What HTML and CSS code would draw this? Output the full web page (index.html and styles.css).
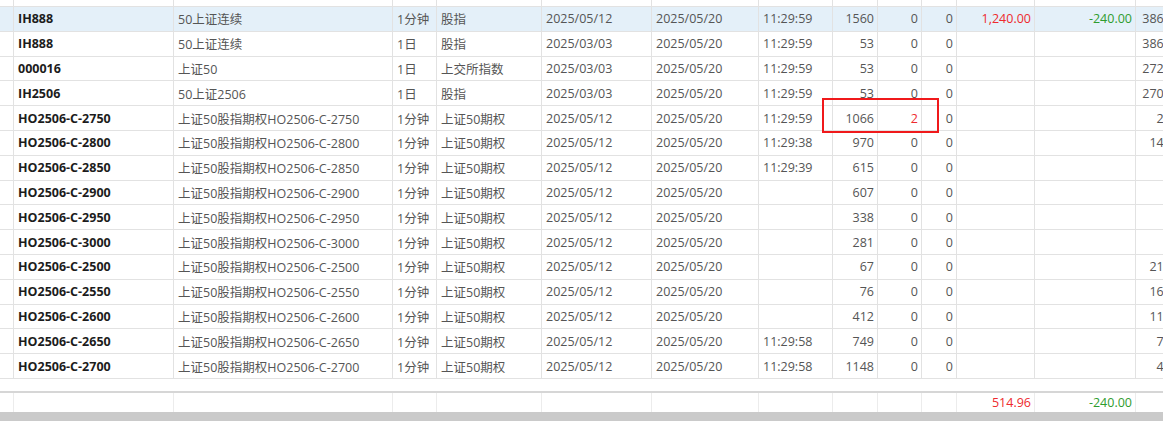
FILE: index.html
```html
<!DOCTYPE html>
<html lang="zh">
<head>
<meta charset="utf-8">
<title>行情</title>
<link rel="stylesheet" href="styles.css">
</head>
<body>
<div class="sheet">
  <div class="rows">
    <div class="row partial"><div class="c"></div><div class="c"></div><div class="c"></div><div class="c"></div><div class="c"></div><div class="c"></div><div class="c"></div><div class="c"></div><div class="c"></div><div class="c"></div><div class="c"></div><div class="c"></div><div class="c"></div><div class="c"></div></div>

    <div class="row sel"><div class="c"></div><div class="c code">IH888</div><div class="c">50上证连续</div><div class="c">1分钟</div><div class="c">股指</div><div class="c">2025/05/12</div><div class="c">2025/05/20</div><div class="c">11:29:59</div><div class="c n">1560</div><div class="c n">0</div><div class="c n">0</div><div class="c n red">1,240.00</div><div class="c n green">-240.00</div><div class="c n last">38695</div></div>

    <div class="row"><div class="c"></div><div class="c code">IH888</div><div class="c">50上证连续</div><div class="c">1日</div><div class="c">股指</div><div class="c">2025/03/03</div><div class="c">2025/05/20</div><div class="c">11:29:59</div><div class="c n">53</div><div class="c n">0</div><div class="c n">0</div><div class="c n"></div><div class="c n"></div><div class="c n last">38695</div></div>

    <div class="row"><div class="c"></div><div class="c code">000016</div><div class="c">上证50</div><div class="c">1日</div><div class="c">上交所指数</div><div class="c">2025/03/03</div><div class="c">2025/05/20</div><div class="c">11:29:59</div><div class="c n">53</div><div class="c n">0</div><div class="c n">0</div><div class="c n"></div><div class="c n"></div><div class="c n last">27205</div></div>

    <div class="row"><div class="c"></div><div class="c code">IH2506</div><div class="c">50上证2506</div><div class="c">1日</div><div class="c">股指</div><div class="c">2025/03/03</div><div class="c">2025/05/20</div><div class="c">11:29:59</div><div class="c n">53</div><div class="c n">0</div><div class="c n">0</div><div class="c n"></div><div class="c n"></div><div class="c n last">27030</div></div>

    <div class="row"><div class="c"></div><div class="c code">HO2506-C-2750</div><div class="c">上证50股指期权HO2506-C-2750</div><div class="c">1分钟</div><div class="c">上证50期权</div><div class="c">2025/05/12</div><div class="c">2025/05/20</div><div class="c">11:29:59</div><div class="c n">1066</div><div class="c n red">2</div><div class="c n">0</div><div class="c n"></div><div class="c n"></div><div class="c n last">255</div></div>

    <div class="row"><div class="c"></div><div class="c code">HO2506-C-2800</div><div class="c">上证50股指期权HO2506-C-2800</div><div class="c">1分钟</div><div class="c">上证50期权</div><div class="c">2025/05/12</div><div class="c">2025/05/20</div><div class="c">11:29:38</div><div class="c n">970</div><div class="c n">0</div><div class="c n">0</div><div class="c n"></div><div class="c n"></div><div class="c n last">1450</div></div>

    <div class="row"><div class="c"></div><div class="c code">HO2506-C-2850</div><div class="c">上证50股指期权HO2506-C-2850</div><div class="c">1分钟</div><div class="c">上证50期权</div><div class="c">2025/05/12</div><div class="c">2025/05/20</div><div class="c">11:29:39</div><div class="c n">615</div><div class="c n">0</div><div class="c n">0</div><div class="c n"></div><div class="c n"></div><div class="c n last">85</div></div>

    <div class="row"><div class="c"></div><div class="c code">HO2506-C-2900</div><div class="c">上证50股指期权HO2506-C-2900</div><div class="c">1分钟</div><div class="c">上证50期权</div><div class="c">2025/05/12</div><div class="c">2025/05/20</div><div class="c"></div><div class="c n">607</div><div class="c n">0</div><div class="c n">0</div><div class="c n"></div><div class="c n"></div><div class="c n last">62</div></div>

    <div class="row"><div class="c"></div><div class="c code">HO2506-C-2950</div><div class="c">上证50股指期权HO2506-C-2950</div><div class="c">1分钟</div><div class="c">上证50期权</div><div class="c">2025/05/12</div><div class="c">2025/05/20</div><div class="c"></div><div class="c n">338</div><div class="c n">0</div><div class="c n">0</div><div class="c n"></div><div class="c n"></div><div class="c n last">45</div></div>

    <div class="row"><div class="c"></div><div class="c code">HO2506-C-3000</div><div class="c">上证50股指期权HO2506-C-3000</div><div class="c">1分钟</div><div class="c">上证50期权</div><div class="c">2025/05/12</div><div class="c">2025/05/20</div><div class="c"></div><div class="c n">281</div><div class="c n">0</div><div class="c n">0</div><div class="c n"></div><div class="c n"></div><div class="c n last">35</div></div>

    <div class="row"><div class="c"></div><div class="c code">HO2506-C-2500</div><div class="c">上证50股指期权HO2506-C-2500</div><div class="c">1分钟</div><div class="c">上证50期权</div><div class="c">2025/05/12</div><div class="c">2025/05/20</div><div class="c"></div><div class="c n">67</div><div class="c n">0</div><div class="c n">0</div><div class="c n"></div><div class="c n"></div><div class="c n last">2100</div></div>

    <div class="row"><div class="c"></div><div class="c code">HO2506-C-2550</div><div class="c">上证50股指期权HO2506-C-2550</div><div class="c">1分钟</div><div class="c">上证50期权</div><div class="c">2025/05/12</div><div class="c">2025/05/20</div><div class="c"></div><div class="c n">76</div><div class="c n">0</div><div class="c n">0</div><div class="c n"></div><div class="c n"></div><div class="c n last">1600</div></div>

    <div class="row"><div class="c"></div><div class="c code">HO2506-C-2600</div><div class="c">上证50股指期权HO2506-C-2600</div><div class="c">1分钟</div><div class="c">上证50期权</div><div class="c">2025/05/12</div><div class="c">2025/05/20</div><div class="c"></div><div class="c n">412</div><div class="c n">0</div><div class="c n">0</div><div class="c n"></div><div class="c n"></div><div class="c n last">1150</div></div>

    <div class="row"><div class="c"></div><div class="c code">HO2506-C-2650</div><div class="c">上证50股指期权HO2506-C-2650</div><div class="c">1分钟</div><div class="c">上证50期权</div><div class="c">2025/05/12</div><div class="c">2025/05/20</div><div class="c">11:29:58</div><div class="c n">749</div><div class="c n">0</div><div class="c n">0</div><div class="c n"></div><div class="c n"></div><div class="c n last">730</div></div>

    <div class="row"><div class="c"></div><div class="c code">HO2506-C-2700</div><div class="c">上证50股指期权HO2506-C-2700</div><div class="c">1分钟</div><div class="c">上证50期权</div><div class="c">2025/05/12</div><div class="c">2025/05/20</div><div class="c">11:29:58</div><div class="c n">1148</div><div class="c n">0</div><div class="c n">0</div><div class="c n"></div><div class="c n"></div><div class="c n last">440</div></div>
  </div>

  <div class="gap"></div>

  <div class="row footer"><div class="c"></div><div class="c"></div><div class="c"></div><div class="c"></div><div class="c"></div><div class="c"></div><div class="c"></div><div class="c"></div><div class="c"></div><div class="c"></div><div class="c"></div><div class="c n red">514.96</div><div class="c n green">-240.00</div><div class="c"></div></div>

  <div class="scrollbar"></div>

  <div class="mark"></div>
</div>
</body>
</html>
```

FILE: styles.css
```css
html, body {
  margin: 0;
  padding: 0;
  background: #ffffff;
  overflow: hidden;
}

body {
  font-family: "Open Sans", "Noto Sans CJK SC", sans-serif;
  font-size: 12.5px;
  color: #555555;
}

.sheet {
  position: relative;
  width: 1200px;
  height: 421px;
  display: flex;
  flex-direction: column;
}

.row {
  display: grid;
  grid-template-columns: 14px 160px 219px 44px 105px 110px 107px 74px 45px 44px 35px 78px 101px 47px;
  height: 24.8px;
  box-sizing: border-box;
  border-bottom: 1px solid #e2e2e2;
}

.row.partial {
  height: 7px;
}

.row.sel {
  background: #e4f0f9;
}

.c {
  border-right: 1px solid #e2e2e2;
  padding: 0 3px 0 4px;
  display: flex;
  align-items: center;
  white-space: nowrap;
  overflow: hidden;
  min-width: 0;
}

.c.n {
  justify-content: flex-end;
}

.c.last {
  justify-content: flex-end;
  padding-right: 4px;
}

.code {
  font-weight: 700;
  color: #1c1c1c;
}

.red {
  color: #ee2a2e;
}

.green {
  color: #2f9c2f;
}

.gap {
  height: 12px;
  border-bottom: 2px solid #d6d6d6;
}

.row.footer {
  height: 19px;
  border-bottom: none;
}

.row.footer .c {
  border-right-color: #ececec;
}

.scrollbar {
  flex: 1;
  background: #cacaca;
}

.mark {
  position: absolute;
  left: 822px;
  top: 98px;
  width: 117px;
  height: 35px;
  box-sizing: border-box;
  border: 2px solid #f0191b;
}
```
